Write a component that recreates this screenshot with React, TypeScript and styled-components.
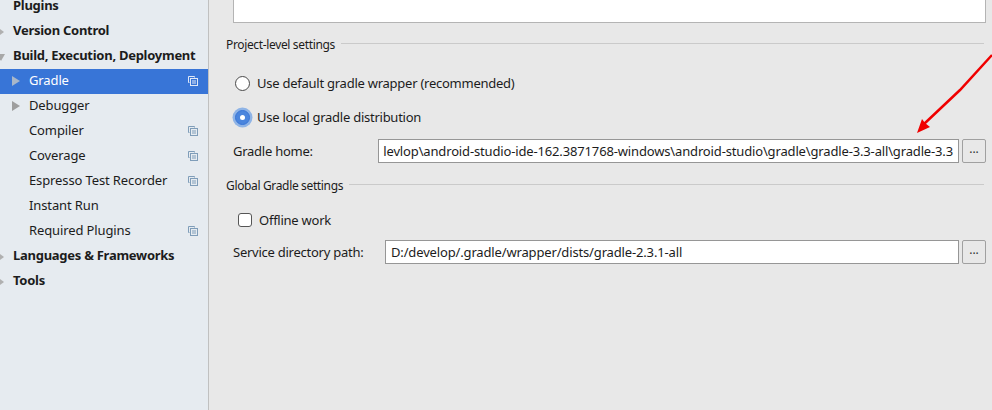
import React from "react";
import styled, { createGlobalStyle } from "styled-components";

const GlobalStyle = createGlobalStyle`
  html, body {
    margin: 0;
    padding: 0;
    background: #e8e8e8;
  }
  body {
    font-family: "Noto Sans", "Open Sans", sans-serif;
    font-size: 13px;
    color: #1c1c1c;
  }
`;

const Window = styled.div`
  position: relative;
  display: flex;
  width: 992px;
  height: 410px;
  overflow: hidden;
`;

const Sidebar = styled.nav`
  flex: 0 0 208px;
  background: #e6ebf0;
  border-right: 1px solid #c0c0c0;
`;

const TreeList = styled.div`
  margin-top: -6px;
`;

const TreeRow = styled.div<{ $top?: boolean; $selected?: boolean }>`
  position: relative;
  box-sizing: border-box;
  display: flex;
  align-items: center;
  height: 25px;
  padding: 0 10px 4px ${(p) => (p.$top ? 13 : 29)}px;
  font-weight: ${(p) => (p.$top ? 700 : 400)};
  letter-spacing: ${(p) => (p.$top ? "-0.27px" : "-0.12px")};
  background: ${(p) => (p.$selected ? "#3875d7" : "transparent")};
  color: ${(p) => (p.$selected ? "#ffffff" : "#1c1c1c")};
`;

const RowLabel = styled.span`
  flex: 1;
  white-space: nowrap;
`;

const Caret = styled.span<{ $down?: boolean; $light?: boolean }>`
  position: absolute;
  top: 50%;
  width: 0;
  height: 0;
  ${(p) =>
    p.$down
      ? `left: -3px; margin-top: -3px; border-left: 4px solid transparent; border-right: 4px solid transparent; border-top: 7px solid #a8a8a8;`
      : p.$light
      ? `left: 12px; margin-top: -6px; border-top: 5px solid transparent; border-bottom: 5px solid transparent; border-left: 8px solid #a9b7c9;`
      : `left: 0; margin-top: -3px; border-top: 3px solid transparent; border-bottom: 3px solid transparent; border-left: 4px solid #b0b0b0;`}
`;

const SubCaret = styled(Caret)`
  left: 12px;
  margin-top: -6px;
  border-top: 5px solid transparent;
  border-bottom: 5px solid transparent;
  border-left: 8px solid #9e9e9e;
`;

const CopyBox = styled.svg`
  flex: 0 0 auto;
  display: block;
  margin-top: 3px;
`;

const CopyIcon = ({ color }: { color: string }) => (
  <CopyBox width="10" height="10" viewBox="0 0 10 10" fill="none" stroke={color}>
    <path d="M6.5 1.5V.5H.5v6h1" />
    <rect x="2.5" y="2.5" width="7" height="7" />
    <path d="M4 5h4M4 7h4" strokeWidth="1" />
  </CopyBox>
);

const Main = styled.main`
  flex: 1;
  min-width: 0;
  display: flex;
  flex-direction: column;
  padding-right: 6px;
  letter-spacing: -0.25px;
`;

const TopBox = styled.div`
  height: 23px;
  margin-left: 24px;
  background: #ffffff;
  border: 1px solid #b4b4b4;
  border-top: 0;
  box-sizing: border-box;
`;

const SectionHeader = styled.div<{ $gap: number }>`
  display: flex;
  align-items: center;
  gap: 6px;
  height: 18px;
  margin-top: ${(p) => p.$gap}px;
  margin-left: 17px;
  margin-right: 2px;
  font-size: 12px;
  letter-spacing: -0.35px;
  white-space: nowrap;
`;

const SectionLine = styled.span`
  flex: 1;
  height: 1px;
  margin-bottom: 2px;
  background: #cacaca;
`;

const OptionRow = styled.div<{ $gap: number }>`
  display: flex;
  align-items: center;
  height: 24px;
  margin-top: ${(p) => p.$gap}px;
  margin-left: 26px;
  white-space: nowrap;
`;

const RadioMark = styled.span<{ $checked?: boolean }>`
  flex: 0 0 auto;
  box-sizing: border-box;
  width: 15px;
  height: 15px;
  margin-right: 7px;
  border-radius: 50%;
  display: flex;
  align-items: center;
  justify-content: center;
  background: ${(p) => (p.$checked ? "#4a85dd" : "#ffffff")};
  border: 1px solid ${(p) => (p.$checked ? "#3875d7" : "#4a4a4a")};
  box-shadow: ${(p) => (p.$checked ? "0 0 0 2.5px #8fb4e6" : "none")};
  &::after {
    content: "";
    display: ${(p) => (p.$checked ? "block" : "none")};
    width: 5px;
    height: 5px;
    border-radius: 50%;
    background: #ffffff;
  }
`;

const CheckMark = styled.span`
  flex: 0 0 auto;
  box-sizing: border-box;
  width: 14px;
  height: 14px;
  margin-left: 3px;
  margin-right: 7px;
  background: #ffffff;
  border: 1px solid #555555;
  border-radius: 3px;
`;

const FieldRow = styled.div<{ $gap: number }>`
  display: flex;
  align-items: center;
  gap: 3px;
  height: 24px;
  margin-top: ${(p) => p.$gap}px;
  margin-left: 24px;
`;

const FieldLabel = styled.label<{ $width: number }>`
  flex: 0 0 ${(p) => p.$width}px;
  white-space: nowrap;
`;

const PathField = styled.div<{ $clipped?: boolean }>`
  flex: 1;
  min-width: 0;
  box-sizing: border-box;
  height: 24px;
  display: flex;
  align-items: center;
  justify-content: ${(p) => (p.$clipped ? "flex-end" : "flex-start")};
  padding: 0 5px;
  overflow: hidden;
  white-space: nowrap;
  letter-spacing: -0.15px;
  background: #ffffff;
  border: 1px solid #969696;
`;

const BrowseButton = styled.button`
  flex: 0 0 24px;
  box-sizing: border-box;
  height: 24px;
  padding: 0 0 5px;
  font: inherit;
  font-size: 12px;
  line-height: 1;
  color: #333333;
  background: #e8e8e8;
  border: 1px solid #a0a0a0;
  border-radius: 2px;
`;

const ArrowOverlay = styled.svg`
  position: absolute;
  left: 900px;
  top: 40px;
  pointer-events: none;
`;

const tree = [
  { label: "Plugins", top: true },
  { label: "Version Control", top: true, caret: "right" },
  { label: "Build, Execution, Deployment", top: true, caret: "down" },
  { label: "Gradle", selected: true, caret: "sub", copy: true },
  { label: "Debugger", caret: "sub" },
  { label: "Compiler", copy: true },
  { label: "Coverage", copy: true },
  { label: "Espresso Test Recorder", copy: true },
  { label: "Instant Run" },
  { label: "Required Plugins", copy: true },
  { label: "Languages & Frameworks", top: true, caret: "right" },
  { label: "Tools", top: true, caret: "right" },
];

export default function App() {
  return (
    <Window>
      <GlobalStyle />
      <Sidebar>
        <TreeList>
          {tree.map((row) => (
            <TreeRow key={row.label} $top={row.top} $selected={row.selected}>
              {row.caret === "right" && <Caret />}
              {row.caret === "down" && <Caret $down />}
              {row.caret === "sub" &&
                (row.selected ? <Caret $light /> : <SubCaret />)}
              <RowLabel>{row.label}</RowLabel>
              {row.copy && (
                <CopyIcon color={row.selected ? "#dfe8f7" : "#7f9db9"} />
              )}
            </TreeRow>
          ))}
        </TreeList>
      </Sidebar>
      <Main>
        <TopBox />
        <SectionHeader $gap={12}>
          Project-level settings
          <SectionLine />
        </SectionHeader>
        <OptionRow $gap={18}>
          <RadioMark />
          Use default gradle wrapper (recommended)
        </OptionRow>
        <OptionRow $gap={10}>
          <RadioMark $checked />
          Use local gradle distribution
        </OptionRow>
        <FieldRow $gap={10}>
          <FieldLabel $width={142}>Gradle home:</FieldLabel>
          <PathField $clipped>
            levlop\android-studio-ide-162.3871768-windows\android-studio\gradle\gradle-3.3-all\gradle-3.3
          </PathField>
          <BrowseButton>...</BrowseButton>
        </FieldRow>
        <SectionHeader $gap={13}>
          Global Gradle settings
          <SectionLine />
        </SectionHeader>
        <OptionRow $gap={14}>
          <CheckMark />
          Offline work
        </OptionRow>
        <FieldRow $gap={8}>
          <FieldLabel $width={149}>Service directory path:</FieldLabel>
          <PathField>D:/develop/.gradle/wrapper/dists/gradle-2.3.1-all</PathField>
          <BrowseButton>...</BrowseButton>
        </FieldRow>
      </Main>
      <ArrowOverlay width="92" height="100" viewBox="0 0 92 100">
        <path d="M92 15 L60 50 L24 84" stroke="#f00000" strokeWidth="2.5" fill="none" />
        <path d="M17 93 L22 79 L25 83 L30 87 Z" fill="#f00000" />
      </ArrowOverlay>
    </Window>
  );
}
